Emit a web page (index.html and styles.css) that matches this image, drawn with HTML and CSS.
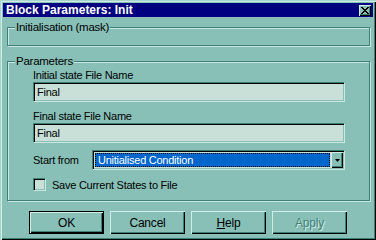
FILE: index.html
```html
<!DOCTYPE html>
<html lang="en">
<head>
  <meta charset="UTF-8">
  <title>Block Parameters: Init</title>
  <link rel="stylesheet" href="styles.css">
</head>
<body>
  <!-- Janela de diálogo -->
  <div class="dialog">
    <div class="titlebar">
      <span class="title">Block Parameters: Init</span>
      <span class="close-btn">
        <svg width="8" height="7" viewBox="0 0 8 7">
          <path d="M0 0h2v1h-2zM6 0h2v1h-2zM1 1h2v1h-2zM5 1h2v1h-2zM2 2h4v1h-4zM3 3h2v1h-2zM2 4h4v1h-4zM1 5h2v1h-2zM5 5h2v1h-2zM0 6h2v1h-2zM6 6h2v1h-2z" fill="#000"/>
        </svg>
      </span>
    </div>

    <div class="content">
      <fieldset class="group group-mask">
        <legend>Initialisation (mask)</legend>
      </fieldset>

      <fieldset class="group group-params">
        <legend>Parameters</legend>
        <div class="field-label">Initial state File Name</div>
        <div class="textbox">Final</div>
        <div class="field-label">Final state File Name</div>
        <div class="textbox">Final</div>

        <div class="combo-row">
          <span class="combo-label">Start from</span>
          <div class="combo">
            <div class="combo-value"><span>Unitialised Condition</span></div>
            <div class="combo-btn">
              <svg width="5" height="3" viewBox="0 0 5 3"><path d="M0 0h5l-2.5 3z" fill="#000"/></svg>
            </div>
          </div>
        </div>

        <div class="check-row">
          <span class="checkbox"></span>
          <span>Save Current States to File</span>
        </div>
      </fieldset>

      <!-- Botões -->
      <div class="buttons">
        <div class="btn btn-default">OK</div>
        <div class="btn">Cancel</div>
        <div class="btn"><u>H</u>elp</div>
        <div class="btn btn-disabled">Apply</div>
      </div>
    </div>
  </div>
</body>
</html>
```

FILE: styles.css
```css
/* Estilos globais */
body {
  margin: 0;
  padding: 0;
  background: #88c0b8;
  font-family: 'Liberation Sans', Arial, sans-serif;
  font-size: 11px;
  color: #000;
}

/* Janela */
.dialog {
  box-sizing: border-box;
  width: 376px;
  height: 240px;
  padding: 3px;
  background: #88c0b8;
  box-shadow:
    inset 1px 1px 0 #a8d4cc,
    inset 2px 2px 0 #d0ece6,
    inset -1px -1px 0 #000,
    inset -2px -2px 0 #408078;
}

/* Barra de título */
.titlebar {
  height: 14px;
  background: #000080;
  display: flex;
  align-items: center;
  justify-content: space-between;
  padding: 0 2px 0 3px;
}

.title {
  color: #fff;
  font-weight: bold;
  font-size: 12px;
  line-height: 14px;
}

.close-btn {
  box-sizing: border-box;
  width: 12px;
  height: 11px;
  background: #88c0b8;
  display: flex;
  align-items: center;
  justify-content: center;
  box-shadow:
    inset 1px 1px 0 #d0ece6,
    inset -1px -1px 0 #000,
    inset -2px -2px 0 #408078;
}

.content {
  padding: 3px 3px 0 4px;
}

/* Grupos */
.group {
  box-sizing: border-box;
  margin: 0;
  min-width: 0;
  border: 1px solid #408078;
  box-shadow: inset 1px 1px 0 #c8e8e0, 1px 1px 0 #c8e8e0;
  padding: 0 24px 0 25px;
  letter-spacing: -0.25px;
}

.group legend {
  padding: 0 1px;
  margin-left: -18px;
  line-height: 14px;
  font-size: 11.5px;
  background: #88c0b8;
}

.group-mask {
  height: 26px;
}

.group-params {
  height: 147px;
  margin-top: 8px;
}

.field-label {
  line-height: 13px;
  margin-top: 1px;
}

.textbox + .field-label {
  margin-top: 8px;
}

.textbox {
  box-sizing: border-box;
  height: 20px;
  background: #c8e0d8;
  border: 1px solid;
  border-color: #408078 #c8e8e0 #c8e8e0 #408078;
  box-shadow: inset 1px 1px 0 #000, inset -1px -1px 0 #88c0b8;
  padding: 0 3px;
  line-height: 18px;
}

/* Combo */
.combo-row {
  display: flex;
  align-items: center;
  margin-top: 7px;
}

.combo-label {
  width: 59px;
}

.combo {
  box-sizing: border-box;
  flex: 1;
  height: 20px;
  display: flex;
  padding: 2px;
  background: #c8e0d8;
  border: 1px solid;
  border-color: #408078 #c8e8e0 #c8e8e0 #408078;
  box-shadow: inset 1px 1px 0 #000, inset -1px -1px 0 #88c0b8;
}

.combo-value {
  flex: 1;
  background: #0066cc;
  color: #fff;
  border: 1px dotted #e8a040;
  box-sizing: border-box;
  outline: 1px dotted #000;
  outline-offset: -1px;
  display: flex;
  align-items: center;
  padding-left: 2px;
}

.combo-btn {
  width: 12px;
  margin: -1px -1px -1px 1px;
  background: #88c0b8;
  display: flex;
  align-items: center;
  justify-content: center;
  box-shadow:
    inset 1px 1px 0 #d0ece6,
    inset -1px -1px 0 #000,
    inset -2px -2px 0 #408078;
}

/* Caixa de seleção */
.check-row {
  display: flex;
  align-items: center;
  gap: 6px;
  margin-top: 8px;
}

.checkbox {
  box-sizing: border-box;
  width: 13px;
  height: 13px;
  background: #c8e0d8;
  border: 1px solid;
  border-color: #408078 #c8e8e0 #c8e8e0 #408078;
  box-shadow: inset 1px 1px 0 #000, inset -1px -1px 0 #88c0b8;
}

/* Botões */
.buttons {
  display: flex;
  gap: 6px;
  margin: 10px 0 0 22px;
}

.btn {
  box-sizing: border-box;
  width: 75px;
  height: 23px;
  display: flex;
  align-items: center;
  justify-content: center;
  font-size: 12px;
  letter-spacing: -0.2px;
  box-shadow:
    inset 1px 1px 0 #d0ece6,
    inset -1px -1px 0 #000,
    inset -2px -2px 0 #408078;
}

.btn-default {
  border: 1px solid #000;
}

.btn-disabled {
  color: #408078;
  text-shadow: 1px 1px 0 #d0ece6;
}
```
